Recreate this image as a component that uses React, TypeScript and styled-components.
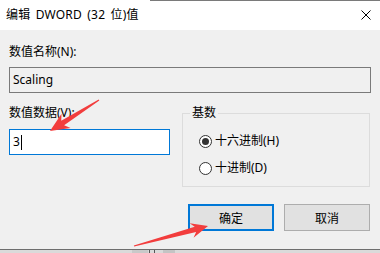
import React from 'react';
import styled, { createGlobalStyle } from 'styled-components';

const GlobalStyle = createGlobalStyle`
  html, body {
    margin: 0;
    padding: 0;
    background: #f0f0f0;
  }
  body {
    font-family: "Noto Sans", "Noto Sans CJK SC", sans-serif;
    font-size: 12px;
    line-height: 16px;
    color: #000;
  }
`;

const Window = styled.div`
  position: relative;
  width: 380px;
  height: 253px;
  display: flex;
  flex-direction: column;
  overflow: hidden;
  background: #f0f0f0;
`;

const TitleBar = styled.div`
  height: 30px;
  flex: none;
  display: flex;
  align-items: center;
  justify-content: space-between;
  padding: 0 9px 0 6px;
  box-sizing: border-box;
  background:
    linear-gradient(to right, transparent 150px, #7a7a7a 150px) top / 100% 1px no-repeat,
    #ffffff;
`;

const Title = styled.span`
  font-size: 12px;
  word-spacing: 2px;
  letter-spacing: 0.2px;
  color: #000;
`;

const Body = styled.div`
  flex: 1;
  display: flex;
  flex-direction: column;
  padding: 14px 10px 0 9px;
`;

const FieldLabel = styled.div`
  height: 16px;
  white-space: nowrap;
`;

const TextBox = styled.div<{ $focused?: boolean; $readOnly?: boolean }>`
  height: 26px;
  box-sizing: border-box;
  margin-top: ${(p) => (p.$readOnly ? '7px' : '8px')};
  margin-right: ${(p) => (p.$readOnly ? '-1px' : '0')};
  display: flex;
  align-items: center;
  padding-left: 3px;
  border: 1px solid ${(p) => (p.$focused ? '#0078d7' : '#7a7a7a')};
  background: ${(p) => (p.$readOnly ? '#f0f0f0' : '#ffffff')};
`;

const Caret = styled.span`
  display: inline-block;
  width: 1px;
  height: 15px;
  margin-left: 1px;
  background: #000;
`;

const Columns = styled.div`
  display: flex;
  align-items: flex-start;
  gap: 12px;
  margin-top: 12px;
`;

const DataColumn = styled.div`
  width: 161px;
  display: flex;
  flex-direction: column;
`;

const Group = styled.fieldset`
  flex: 1;
  margin: 0;
  padding: 0 0 10px 0;
  border: 1px solid #dcdcdc;
  display: flex;
  flex-direction: column;
  gap: 11px;
  min-width: 0;
`;

const Legend = styled.legend`
  margin-left: 7px;
  padding: 0 2px;
  line-height: 16px;
  height: 16px;
  margin-bottom: 12px;
`;

const RadioRow = styled.label`
  display: flex;
  align-items: center;
  height: 16px;
  padding-left: 16px;
  white-space: nowrap;
`;

const RadioCircle = styled.span<{ $checked?: boolean }>`
  width: 13px;
  height: 13px;
  box-sizing: border-box;
  border-radius: 50%;
  border: 1px solid #333;
  background: #fff;
  display: flex;
  align-items: center;
  justify-content: center;
  margin-right: 3px;

  &::after {
    content: '';
    width: 7px;
    height: 7px;
    border-radius: 50%;
    background: #333;
    display: ${(p) => (p.$checked ? 'block' : 'none')};
  }
`;

const ButtonRow = styled.div`
  display: flex;
  justify-content: flex-end;
  gap: 10px;
  margin-top: 17px;
`;

const Button = styled.button<{ $primary?: boolean }>`
  width: 86px;
  height: 27px;
  box-sizing: border-box;
  padding: 0;
  background: #e1e1e1;
  border: ${(p) => (p.$primary ? '2px solid #0078d7' : '1px solid #adadad')};
  font-family: inherit;
  font-size: 12px;
  color: #000;
`;

const BottomStrip = styled.div`
  height: 3px;
  flex: none;
  border-top: 1px solid #6e6e6e;
  background: #dadada;
  display: flex;
  padding-left: 132px;
  gap: 1px;
`;

const StripBlock = styled.span<{ $w: number; $c: string }>`
  width: ${(p) => p.$w}px;
  background: ${(p) => p.$c};
`;

const Overlay = styled.svg`
  position: absolute;
  left: 0;
  top: 0;
  pointer-events: none;
`;

const CloseIcon = () => (
  <svg width="10" height="10" viewBox="0 0 10 10">
    <path d="M0.5 0.5 L9.5 9.5 M9.5 0.5 L0.5 9.5" stroke="#000" strokeWidth="1" fill="none" />
  </svg>
);

type Pt = [number, number];

const RedArrow = ({ from, to, head = 17, wing = 7.5 }: { from: Pt; to: Pt; head?: number; wing?: number }) => {
  const dx = to[0] - from[0];
  const dy = to[1] - from[1];
  const L = Math.sqrt(dx * dx + dy * dy);
  const angle = (Math.atan2(dy, dx) * 180) / Math.PI;
  const pts = [
    [0, -0.6],
    [L - head + 4, -2.7],
    [L - head, -wing],
    [L, 0],
    [L - head, wing],
    [L - head + 4, 2.7],
    [0, 0.6],
  ]
    .map((p) => p.join(','))
    .join(' ');
  return (
    <polygon
      points={pts}
      fill="#f23d3d"
      transform={`translate(${from[0]} ${from[1]}) rotate(${angle})`}
    />
  );
};

const App = () => {
  return (
    <>
      <GlobalStyle />
      <Window>
        <TitleBar>
          <Title>编辑 DWORD (32 位)值</Title>
          <CloseIcon />
        </TitleBar>

        <Body>
          <FieldLabel>数值名称(N):</FieldLabel>
          <TextBox $readOnly>Scaling</TextBox>

          <Columns>
            <DataColumn>
              <FieldLabel>数值数据(V):</FieldLabel>
              <TextBox $focused>
                3<Caret />
              </TextBox>
            </DataColumn>

            <Group>
              <Legend>基数</Legend>
              <RadioRow>
                <RadioCircle $checked />
                十六进制(H)
              </RadioRow>
              <RadioRow>
                <RadioCircle />
                十进制(D)
              </RadioRow>
            </Group>
          </Columns>

          <ButtonRow>
            <Button $primary>确定</Button>
            <Button>取消</Button>
          </ButtonRow>
        </Body>

        <BottomStrip>
          <StripBlock $w={16} $c="#c9c9c9" />
          <StripBlock $w={1} $c="#555" />
          <StripBlock $w={2} $c="#dadada" />
          <StripBlock $w={1} $c="#555" />
          <StripBlock $w={6} $c="#dadada" />
          <StripBlock $w={12} $c="#c4c4c4" />
        </BottomStrip>

        <Overlay width="380" height="253" viewBox="0 0 380 253">
          <RedArrow from={[99, 100]} to={[50, 131]} head={19} wing={8.5} />
          <RedArrow from={[134, 246]} to={[208, 226]} />
        </Overlay>
      </Window>
    </>
  );
};

export default App;
